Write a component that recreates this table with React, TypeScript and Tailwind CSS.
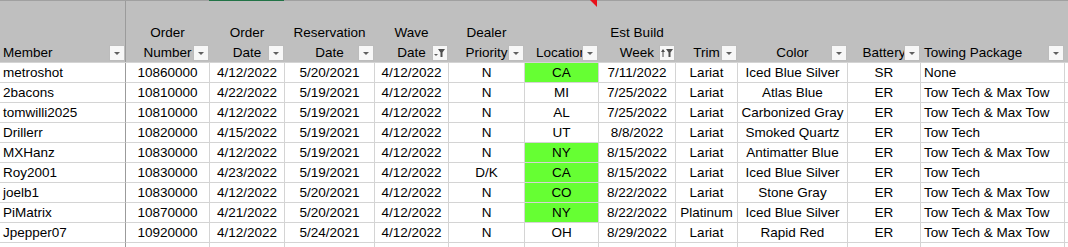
import React from 'react';

type Head = { top?: string; bottom: string; left?: boolean; icon?: 'dd' | 'filter' | 'sort'; note?: boolean };

const HEADERS: Head[] = [
  { bottom: 'Member', left: true },
  { top: 'Order', bottom: 'Number' },
  { top: 'Order', bottom: 'Date' },
  { top: 'Reservation', bottom: 'Date' },
  { top: 'Wave', bottom: 'Date', icon: 'filter' },
  { top: 'Dealer', bottom: 'Priority' },
  { bottom: 'Location', note: true },
  { top: 'Est Build', bottom: 'Week', icon: 'sort' },
  { bottom: 'Trim' },
  { bottom: 'Color' },
  { bottom: 'Battery' },
  { bottom: 'Towing Package', left: true },
];

const ROWS = [
  ['metroshot', '10860000', '4/12/2022', '5/20/2021', '4/12/2022', 'N', 'CA', '7/11/2022', 'Lariat', 'Iced Blue Silver', 'SR', 'None'],
  ['2bacons', '10810000', '4/22/2022', '5/19/2021', '4/12/2022', 'N', 'MI', '7/25/2022', 'Lariat', 'Atlas Blue', 'ER', 'Tow Tech & Max Tow'],
  ['tomwilli2025', '10810000', '4/12/2022', '5/19/2021', '4/12/2022', 'N', 'AL', '7/25/2022', 'Lariat', 'Carbonized Gray', 'ER', 'Tow Tech & Max Tow'],
  ['Drillerr', '10820000', '4/15/2022', '5/19/2021', '4/12/2022', 'N', 'UT', '8/8/2022', 'Lariat', 'Smoked Quartz', 'ER', 'Tow Tech'],
  ['MXHanz', '10830000', '4/12/2022', '5/19/2021', '4/12/2022', 'N', 'NY', '8/15/2022', 'Lariat', 'Antimatter Blue', 'ER', 'Tow Tech & Max Tow'],
  ['Roy2001', '10830000', '4/23/2022', '5/19/2021', '4/12/2022', 'D/K', 'CA', '8/15/2022', 'Lariat', 'Iced Blue Silver', 'ER', 'Tow Tech'],
  ['joelb1', '10830000', '4/12/2022', '5/20/2021', '4/12/2022', 'N', 'CO', '8/22/2022', 'Lariat', 'Stone Gray', 'ER', 'Tow Tech & Max Tow'],
  ['PiMatrix', '10870000', '4/21/2022', '5/20/2021', '4/12/2022', 'N', 'NY', '8/22/2022', 'Platinum', 'Iced Blue Silver', 'ER', 'Tow Tech & Max Tow'],
  ['Jpepper07', '10920000', '4/12/2022', '5/24/2021', '4/12/2022', 'N', 'OH', '8/29/2022', 'Lariat', 'Rapid Red', 'ER', 'Tow Tech & Max Tow'],
];

// rows whose Location cell is highlighted
const GREEN = [0, 4, 5, 6, 7];

const GRID = 'grid grid-cols-[126px_84px_75px_90px_74px_76px_74px_77px_62px_110px_73px_144px_1fr]';

function FilterButton({ icon = 'dd' }: { icon?: Head['icon'] }) {
  return (
    <div className="absolute right-0 bottom-[1px] w-4 h-4 border border-[#bcbcbc] bg-[#f7f7f7]">
      <svg width="14" height="14" viewBox="0 0 14 14" className="block">
        {icon === 'dd' && <polygon points="4,6 10,6 7,9" fill="#5f5f5f" />}
        {icon === 'filter' && (
          <>
            <polygon points="1,8 5,8 3,10" fill="#5f5f5f" />
            <polygon points="5,3 12,3 9.5,6.5 9.5,11 7.5,11 7.5,6.5" fill="#4f4f4f" />
          </>
        )}
        {icon === 'sort' && (
          <>
            <line x1="3" y1="4" x2="3" y2="11" stroke="#4f4f4f" strokeWidth="1" />
            <polygon points="1,6 5,6 3,3" fill="#4f4f4f" />
            <polygon points="6,3 13,3 10.5,6.5 10.5,11 8.5,11 8.5,6.5" fill="#4f4f4f" />
          </>
        )}
      </svg>
    </div>
  );
}

export default function App() {
  return (
    <div className="w-[1068px] h-[247px] overflow-hidden bg-white text-black font-['Liberation_Sans',Arial,sans-serif] text-[13.5px]">
      {/* top edge, Order Date column selected */}
      <div className="flex h-px">
        <div className="w-[209px] bg-[#a0a0a0]" />
        <div className="w-[75px] bg-[#217346]" />
        <div className="flex-1 bg-[#a0a0a0]" />
      </div>

      {/* header row */}
      <div className={`${GRID} h-[62px] bg-[#bfbfbf] border-b border-[#d4d4d4]`}>
        {HEADERS.map((h, i) => (
          <div
            key={i}
            className={`relative flex flex-col justify-end leading-5 whitespace-nowrap border-r ${
              i === 0 ? 'border-[#9b9b9b]' : 'border-transparent'
            } ${h.left ? 'items-start pl-[3px]' : 'items-center'}`}
          >
            {h.top && <span className="translate-y-px">{h.top}</span>}
            <span className="translate-y-px">{h.bottom}</span>
            {h.note && (
              <svg width="7" height="7" viewBox="0 0 7 7" className="absolute -top-px right-px">
                <polygon points="0,0 7,0 7,7" fill="#e8101a" />
              </svg>
            )}
            <FilterButton icon={h.icon} />
          </div>
        ))}
        <div />
      </div>

      {/* data rows */}
      {[...ROWS, null].map((row, r) => (
        <div key={r} className={`${GRID} h-5`}>
          {HEADERS.map((h, c) => (
            <div
              key={c}
              className={`h-5 leading-5 whitespace-nowrap overflow-hidden border-r border-b ${
                c === 0 ? 'border-r-[#9b9b9b] border-b-[#d4d4d4]' : 'border-[#d4d4d4]'
              } ${h.left ? 'text-left pl-[3px]' : 'text-center'} ${
                c === 6 && GREEN.includes(r) ? 'bg-[#66ff33]' : ''
              }`}
            >
              {row ? row[c] : ''}
            </div>
          ))}
          <div className="h-5 border-b border-[#d4d4d4]" />
        </div>
      ))}
    </div>
  );
}
